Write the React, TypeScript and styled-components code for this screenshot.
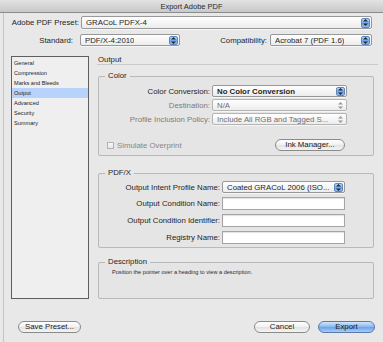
import React from 'react';
import styled, { createGlobalStyle, css } from 'styled-components';

const GlobalStyle = createGlobalStyle`
  html, body {
    margin: 0;
    padding: 0;
    background: #e8e8e8;
  }
  * {
    box-sizing: border-box;
  }
`;

const Window = styled.div`
  width: 383px;
  height: 342px;
  background: #e8e8e8;
  display: flex;
  flex-direction: column;
  font-family: "Liberation Sans", Arial, sans-serif;
  color: #1e1e1e;
  overflow: hidden;
`;

const TitleBar = styled.div`
  height: 13px;
  flex: none;
  background: linear-gradient(#e2e2e2, #c9c9c9);
  border-bottom: 1px solid #8c8c8c;
  display: flex;
  align-items: center;
  justify-content: center;
  font-size: 7.5px;
  color: #2a2a2a;
`;

const Body = styled.div`
  flex: 1;
  display: flex;
  flex-direction: column;
  margin-left: 3px;
  border-left: 1px solid #c4c4c4;
`;

const TopRow = styled.div<{ $top: number; $h: number }>`
  display: flex;
  align-items: center;
  margin-top: ${p => p.$top}px;
  height: ${p => p.$h}px;
`;

const Label = styled.span<{ $w: number; $dim?: boolean }>`
  flex: none;
  width: ${p => p.$w}px;
  text-align: right;
  font-size: 7.8px;
  white-space: nowrap;
  color: ${p => (p.$dim ? '#7c7c7c' : '#1e1e1e')};
`;

const SelectBox = styled.div<{ $w: number; $h: number; $ml: number; $dim?: boolean }>`
  flex: none;
  width: ${p => p.$w}px;
  height: ${p => p.$h}px;
  margin-left: ${p => p.$ml}px;
  display: flex;
  align-items: center;
  justify-content: space-between;
  padding: 0 1px 0 4px;
  border: 1px solid ${p => (p.$dim ? '#b4b4b4' : '#989898')};
  border-radius: 2px;
  background: linear-gradient(#ffffff, #ececec);
  box-shadow: 0 1px 0 rgba(255, 255, 255, 0.6);
  font-size: 7.8px;
  white-space: nowrap;
  color: ${p => (p.$dim ? '#6e6e6e' : '#1e1e1e')};
`;

const SelectText = styled.span<{ $bold?: boolean }>`
  font-weight: ${p => (p.$bold ? 700 : 400)};
  overflow: hidden;
`;

const Stepper = styled.span<{ $dim?: boolean }>`
  flex: none;
  width: 9px;
  height: calc(100% - 1px);
  border-radius: 2px;
  display: flex;
  align-items: center;
  justify-content: center;
  ${p =>
    p.$dim
      ? css`
          background: transparent;
        `
      : css`
          background: linear-gradient(#b9d5f6, #6fa3e6 55%, #8fbaf0);
          border: 1px solid #5f86bd;
        `}
`;

const Arrows = ({ dim }: { dim?: boolean }) => (
  <svg width="5" height="7" viewBox="0 0 5 7">
    <path d="M2.5 0 L5 2.6 L0 2.6 Z" fill={dim ? '#9a9a9a' : '#1b2b44'} />
    <path d="M2.5 7 L5 4.4 L0 4.4 Z" fill={dim ? '#9a9a9a' : '#1b2b44'} />
  </svg>
);

type SelectProps = {
  value: string;
  w: number;
  h?: number;
  ml?: number;
  bold?: boolean;
  dim?: boolean;
};

const Select = ({ value, w, h = 12, ml = 0, bold, dim }: SelectProps) => (
  <SelectBox $w={w} $h={h} $ml={ml} $dim={dim}>
    <SelectText $bold={bold}>{value}</SelectText>
    <Stepper $dim={dim}>
      <Arrows dim={dim} />
    </Stepper>
  </SelectBox>
);

const Main = styled.div`
  display: flex;
  margin-top: 10px;
  height: 243px;
`;

const List = styled.ul`
  list-style: none;
  margin: 0 0 0 7px;
  padding: 1px 0 0;
  width: 78px;
  flex: none;
  border: 1px solid #5e5e5e;
  background: #efefef;
`;

const ListItem = styled.li<{ $active?: boolean }>`
  height: 10px;
  line-height: 10px;
  padding-left: 2px;
  font-size: 5.6px;
  color: #222;
  background: ${p => (p.$active ? '#b7d3fb' : 'transparent')};
`;

const Panel = styled.div`
  flex: 1;
  margin: 0 5px 0 8px;
  display: flex;
  flex-direction: column;
`;

const PanelHeader = styled.div`
  height: 9px;
  flex: none;
  border-bottom: 1px solid #cacaca;
  font-size: 7.8px;
  line-height: 8px;
  padding-left: 1px;
`;

const Group = styled.fieldset<{ $top: number; $grow?: boolean }>`
  margin: ${p => p.$top}px 4px 0 1px;
  padding: 0;
  border: 1px solid #b9b9b9;
  border-radius: 2px;
  background: #e5e5e5;
  min-width: 0;
  ${p => (p.$grow ? 'flex: 1;' : '')}
`;

const Legend = styled.legend`
  margin-left: 6px;
  padding: 0 3px;
  font-size: 7.8px;
  line-height: 10px;
`;

const FormGrid = styled.div<{ $label: number; $field: number; $pt: number; $gap: number; $pb: number }>`
  display: grid;
  grid-template-columns: ${p => p.$label}px ${p => p.$field}px;
  column-gap: 2px;
  row-gap: ${p => p.$gap}px;
  align-items: center;
  padding: ${p => p.$pt}px 0 ${p => p.$pb}px;
`;

const FieldLabel = styled.span<{ $dim?: boolean }>`
  text-align: right;
  font-size: 7.8px;
  white-space: nowrap;
  color: ${p => (p.$dim ? '#7c7c7c' : '#1e1e1e')};
`;

const TextInput = styled.div`
  height: 13px;
  border: 1px solid #a4a4a4;
  background: #fff;
  box-shadow: inset 0 1px 1px rgba(0, 0, 0, 0.12);
`;

const OptionRow = styled.div`
  display: flex;
  align-items: center;
  justify-content: space-between;
  margin-top: 14px;
  padding: 0 28px 4px 8px;
`;

const CheckLabel = styled.label`
  display: flex;
  align-items: center;
  gap: 3px;
  font-size: 7.8px;
  color: #868686;
`;

const Check = styled.span`
  width: 7px;
  height: 7px;
  border: 1px solid #b2b2b2;
  background: linear-gradient(#fafafa, #e6e6e6);
`;

const PillButton = styled.button<{ $w: number; $primary?: boolean }>`
  width: ${p => p.$w}px;
  height: 12px;
  padding: 0;
  border-radius: 7px;
  font-family: inherit;
  font-size: 7.8px;
  line-height: 10px;
  color: #1a1a1a;
  border: 1px solid ${p => (p.$primary ? '#5a78a8' : '#8a8a8a')};
  background: ${p =>
    p.$primary
      ? 'linear-gradient(#d3e6fc, #86b6f0 50%, #6aa1e8 51%, #a9cdf6)'
      : 'linear-gradient(#ffffff, #f0f0f0 50%, #e2e2e2 51%, #f4f4f4)'};
`;

const Description = styled.p`
  margin: 0;
  padding: 2px 0 0 13px;
  font-size: 5.6px;
  line-height: 7px;
  color: #2a2a2a;
`;

const Footer = styled.div`
  display: flex;
  align-items: center;
  margin-top: 22px;
  padding: 0 8px 0 14px;
  height: 12px;
`;

const FooterRight = styled.div`
  margin-left: auto;
  display: flex;
  gap: 8px;
`;

const sections = ['General', 'Compression', 'Marks and Bleeds', 'Output', 'Advanced', 'Security', 'Summary'];

const App = () => {
  return (
    <>
      <GlobalStyle />
      <Window>
        <TitleBar>Export Adobe PDF</TitleBar>
        <Body>
          <TopRow $top={3} $h={13}>
            <Label $w={75}>Adobe PDF Preset:</Label>
            <Select value="GRACoL PDFX-4" w={291} h={13} ml={2} />
          </TopRow>
          <TopRow $top={5} $h={12}>
            <Label $w={69}>Standard:</Label>
            <Select value="PDF/X-4:2010" w={100} ml={7} />
            <Label $w={87}>Compatibility:</Label>
            <Select value="Acrobat 7 (PDF 1.6)" w={102} ml={3} />
          </TopRow>
          <Main>
            <List>
              {sections.map(s => (
                <ListItem key={s} $active={s === 'Output'}>
                  {s}
                </ListItem>
              ))}
            </List>
            <Panel>
              <PanelHeader>Output</PanelHeader>
              <Group $top={6}>
                <Legend>Color</Legend>
                <FormGrid $label={111} $field={135} $pt={4} $gap={2} $pb={0}>
                  <FieldLabel>Color Conversion:</FieldLabel>
                  <Select value="No Color Conversion" w={135} bold />
                  <FieldLabel $dim>Destination:</FieldLabel>
                  <Select value="N/A" w={135} dim />
                  <FieldLabel $dim>Profile Inclusion Policy:</FieldLabel>
                  <Select value="Include All RGB and Tagged S..." w={135} dim />
                </FormGrid>
                <OptionRow>
                  <CheckLabel>
                    <Check />
                    Simulate Overprint
                  </CheckLabel>
                  <PillButton $w={70}>Ink Manager...</PillButton>
                </OptionRow>
              </Group>
              <Group $top={12}>
                <Legend>PDF/X</Legend>
                <FormGrid $label={121} $field={123} $pt={3} $gap={4} $pb={3}>
                  <FieldLabel>Output Intent Profile Name:</FieldLabel>
                  <Select value="Coated GRACoL 2006 (ISO..." w={123} />
                  <FieldLabel>Output Condition Name:</FieldLabel>
                  <TextInput />
                  <FieldLabel>Output Condition Identifier:</FieldLabel>
                  <TextInput />
                  <FieldLabel>Registry Name:</FieldLabel>
                  <TextInput />
                </FormGrid>
              </Group>
              <Group $top={9} $grow>
                <Legend>Description</Legend>
                <Description>Position the pointer over a heading to view a description.</Description>
              </Group>
            </Panel>
          </Main>
          <Footer>
            <PillButton $w={63}>Save Preset...</PillButton>
            <FooterRight>
              <PillButton $w={56}>Cancel</PillButton>
              <PillButton $w={57} $primary>
                Export
              </PillButton>
            </FooterRight>
          </Footer>
        </Body>
      </Window>
    </>
  );
};

export default App;
